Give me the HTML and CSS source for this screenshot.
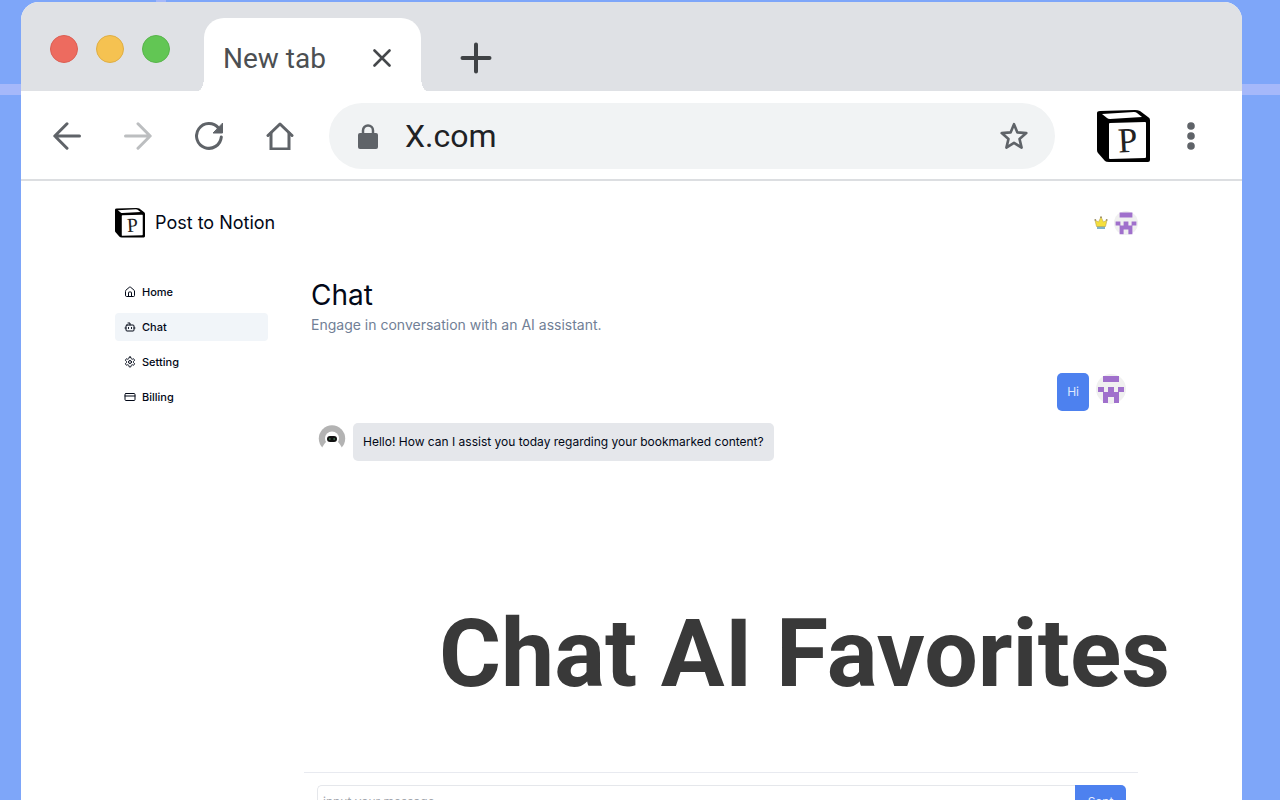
FILE: index.html
```html
<!DOCTYPE html>
<html lang="en">
<head>
    <meta charset="UTF-8">
    <meta name="viewport" content="width=device-width, initial-scale=1.0">
    <title>Post to Notion</title>
    <link rel="stylesheet" href="styles.css">
</head>
<body>
    <!-- Shared shapes -->
    <svg class="defs" aria-hidden="true">
        <symbol id="logo" viewBox="0 0 53 53">
            <path d="M0 3Q0 1 3 1L38 0Q41 0 43 1L51 7Q53 8 53 10V50Q53 52 51 52L12 52Q9 52 8 51L1 43Q0 42 0 40Z" fill="#000"/>
            <path d="M5 4 37 2Q39 2 40 3L45 7 13 9Q11 9 10 8Z" fill="#fff"/>
            <path d="M13 13 48 12Q49 12 49 13V47Q49 48 48 48L13 49Q12 49 12 48V14Q12 13 13 13Z" fill="#fff"/>
            <text x="21" y="42" font-family="Liberation Serif, serif" font-size="35" fill="#222" transform="rotate(-3 30 31)">P</text>
        </symbol>
        <symbol id="avatar" viewBox="0 0 30 30">
            <circle cx="15" cy="15" r="15" fill="#f0f0f0"/>
            <path d="M7 2H23V8H7ZM2 13H8V18H2ZM12 13H18V18H23V29H18V23H12V29H7V18H12ZM22 13H28V18H22Z" fill="#a070cc"/>
        </symbol>
    </svg>

    <div class="window">
        <header class="tab-strip">
            <div class="lights">
                <span class="light red"></span>
                <span class="light yellow"></span>
                <span class="light green"></span>
            </div>
            <div class="tab">
                <span>New tab</span>
                <button class="icon-btn" aria-label="Close tab">
                    <svg width="18" height="18" viewBox="0 0 18 18" stroke="#45484b" stroke-width="2.6" stroke-linecap="round"><path d="M1.500 1.500 16.500 16.500M16.500 1.500 1.500 16.500"/></svg>
                </button>
            </div>
            <button class="icon-btn new-tab" aria-label="Open new tab">
                <svg width="32" height="32" viewBox="0 0 32 32" stroke="#3f4245" stroke-width="4" stroke-linecap="round"><path d="M16 2.500V29.500M2.500 16H29.500"/></svg>
            </button>
        </header>

        <nav class="toolbar" aria-label="Browser">
            <div class="nav-buttons">
                <button class="icon-btn" aria-label="Back">
                    <svg width="28" height="28" viewBox="0 0 28 28" fill="none" stroke="#5f6368" stroke-width="3" stroke-linecap="round" stroke-linejoin="round"><path d="M26.500 14H2M14 1.800 1.800 14 14 26.200"/></svg>
                </button>
                <button class="icon-btn" aria-label="Forward">
                    <svg width="28" height="28" viewBox="0 0 28 28" fill="none" stroke="#bcbec0" stroke-width="3" stroke-linecap="round" stroke-linejoin="round"><path d="M1.500 14H26M14 1.800 26.200 14 14 26.200"/></svg>
                </button>
                <button class="icon-btn" aria-label="Reload">
                    <svg width="28" height="28" viewBox="0 0 28 28" fill="none" stroke="#5f6368" stroke-width="3" stroke-linecap="round"><path d="M26.300 15A12.400 12.400 0 1 1 23.500 6"/><path d="M27.500 1.500V11H18.500Z" fill="#5f6368" stroke="#5f6368" stroke-width="1"/></svg>
                </button>
                <button class="icon-btn" aria-label="Home page">
                    <svg width="28" height="28" viewBox="0 0 28 28" fill="none" stroke="#5f6368" stroke-width="3" stroke-linecap="round" stroke-linejoin="round"><path d="M2 13.500 14 2 26 13.500"/><path d="M5 11V27H23V11" stroke-linejoin="miter"/></svg>
                </button>
            </div>
            <div class="address">
                <svg width="20" height="25" viewBox="0 0 20 25"><path d="M5 10V6.500A5 5 0 0 1 15 6.500V10" fill="none" stroke="#5f6368" stroke-width="2.500"/><rect y="9" width="20" height="16" rx="2" fill="#5f6368"/></svg>
                <input type="text" value="X.com" aria-label="Address">
                <button class="icon-btn" aria-label="Bookmark this tab">
                    <svg width="28" height="28" viewBox="0 0 28 28" fill="none" stroke="#5f6368" stroke-width="2.600" stroke-linejoin="round"><path d="M14 2.200 17.400 10.400 26.300 11.100 19.500 16.900 21.600 25.600 14 20.900 6.400 25.600 8.500 16.900 1.700 11.100 10.600 10.400Z"/></svg>
                </button>
            </div>
            <button class="icon-btn extension" aria-label="Post to Notion extension">
                <svg width="53" height="53"><use href="#logo"/></svg>
            </button>
            <button class="icon-btn" aria-label="Menu">
                <svg width="8" height="28" viewBox="0 0 8 28" fill="#5f6368"><circle cx="4" cy="4" r="3.800"/><circle cx="4" cy="14" r="3.800"/><circle cx="4" cy="24" r="3.800"/></svg>
            </button>
        </nav>

        <div class="app">
            <header class="app-header">
                <a class="brand" href="#">
                    <svg width="30" height="30"><use href="#logo"/></svg>
                    <span>Post to Notion</span>
                </a>
                <div class="account">
                    <svg width="14" height="14" viewBox="0 0 14 14"><path d="M3 10H11V13H3Z" fill="#7fb2c9"/><path d="M1 4 4.500 6 7 1 9.500 6 13 4 11.500 10.500H2.500Z" fill="#f5df3c" stroke="#b9a650" stroke-width=".6"/><circle cx="1.300" cy="3.800" r=".9" fill="#9a8c62"/><circle cx="7" cy="1.200" r=".9" fill="#9a8c62"/><circle cx="12.700" cy="3.800" r=".9" fill="#9a8c62"/></svg>
                    <svg width="24" height="24"><use href="#avatar"/></svg>
                </div>
            </header>

            <div class="columns">
                <nav class="sidebar" aria-label="Main">
                    <a href="#">
                        <svg class="menu-icon" viewBox="0 0 24 24"><path d="M15 21v-8a1 1 0 0 0-1-1h-4a1 1 0 0 0-1 1v8"/><path d="M3 10a2 2 0 0 1 .7-1.500l7-6a2 2 0 0 1 2.600 0l7 6A2 2 0 0 1 21 10v9a2 2 0 0 1-2 2H5a2 2 0 0 1-2-2z"/></svg>
                        Home
                    </a>
                    <a href="#" class="active">
                        <svg class="menu-icon" viewBox="0 0 24 24"><path d="M12 8V4H8"/><rect width="16" height="12" x="4" y="8" rx="2"/><path d="M2 14h2M20 14h2M15 13v2M9 13v2"/></svg>
                        Chat
                    </a>
                    <a href="#">
                        <svg class="menu-icon" viewBox="0 0 24 24"><path d="M12.220 2h-.44a2 2 0 0 0-2 2v.18a2 2 0 0 1-1 1.730l-.43.25a2 2 0 0 1-2 0l-.15-.08a2 2 0 0 0-2.730.73l-.22.38a2 2 0 0 0 .73 2.730l.15.1a2 2 0 0 1 1 1.720v.51a2 2 0 0 1-1 1.740l-.15.09a2 2 0 0 0-.73 2.730l.22.38a2 2 0 0 0 2.730.73l.15-.08a2 2 0 0 1 2 0l.43.25a2 2 0 0 1 1 1.730V20a2 2 0 0 0 2 2h.44a2 2 0 0 0 2-2v-.18a2 2 0 0 1 1-1.730l.43-.25a2 2 0 0 1 2 0l.15.08a2 2 0 0 0 2.730-.73l.22-.39a2 2 0 0 0-.73-2.730l-.15-.08a2 2 0 0 1-1-1.740v-.5a2 2 0 0 1 1-1.740l.15-.09a2 2 0 0 0 .73-2.730l-.22-.38a2 2 0 0 0-2.730-.73l-.15.08a2 2 0 0 1-2 0l-.43-.25a2 2 0 0 1-1-1.730V4a2 2 0 0 0-2-2z"/><circle cx="12" cy="12" r="3"/></svg>
                        Setting
                    </a>
                    <a href="#">
                        <svg class="menu-icon" viewBox="0 0 24 24"><rect width="20" height="14" x="2" y="5" rx="2"/><path d="M2 10h20"/></svg>
                        Billing
                    </a>
                </nav>

                <main class="chat">
                    <h1>Chat</h1>
                    <p class="subtitle">Engage in conversation with an AI assistant.</p>

                    <div class="messages">
                        <div class="message mine">
                            <p class="bubble">Hi</p>
                            <svg width="30" height="30"><use href="#avatar"/></svg>
                        </div>
                        <div class="message">
                            <svg width="28" height="28" viewBox="0 0 28 28"><circle cx="14" cy="14.500" r="13.200" fill="#b3b3b3"/><circle cx="14" cy="14.500" r="7" fill="#fff"/><path d="M3 28Q4 22 8 18L14 16 20 18Q24 22 25 28Z" fill="#fff"/><rect x="9" y="12" width="10" height="6" rx="3" fill="#111"/><circle cx="11.800" cy="15" r=".9" fill="#3d6b4d"/><circle cx="16.200" cy="15" r=".9" fill="#3d6b4d"/></svg>
                            <p class="bubble">Hello! How can I assist you today regarding your bookmarked content?</p>
                        </div>
                    </div>

                    <form class="composer">
                        <input type="text" placeholder="input your message" aria-label="Message">
                        <button type="submit">Sent</button>
                    </form>
                </main>
            </div>
        </div>

        <p class="caption">Chat AI Favorites</p>
    </div>
</body>
</html>
```

FILE: styles.css
```css
* {
    box-sizing: border-box;
}
body {
    margin: 0;
    height: 100vh;
    padding: 2px 38px 0 21px;
    overflow: hidden;
    font-family: Inter, "Liberation Sans", sans-serif;
    color: #020817;
    background-color: #7ea6f9;
    background-image:
        linear-gradient(#a5b8fa, #a5b8fa),
        linear-gradient(#a5b8fa, #a5b8fa);
    background-size: 100% 11px, 10px 100%;
    background-position: 0 84px, 156px 0;
    background-repeat: no-repeat;
}
h1, p {
    margin: 0;
    font-weight: 400;
}
svg {
    display: block;
    flex: none;
}
a {
    color: inherit;
    text-decoration: none;
}
.defs {
    position: absolute;
    width: 0;
    height: 0;
}
.icon-btn {
    padding: 0;
    border: none;
    background: none;
    cursor: pointer;
}

.window {
    position: relative;
    background: #fff;
    border-radius: 18px 18px 0 0;
}

/* Tab strip */
.tab-strip {
    display: flex;
    align-items: flex-end;
    height: 89px;
    padding-left: 29px;
    background: #dfe1e5;
    border-radius: 18px 18px 0 0;
}
.lights {
    display: flex;
    gap: 18px;
    margin-right: 34px;
    padding-bottom: 28px;
}
.light {
    width: 28px;
    height: 28px;
    border-radius: 50%;
    border: 1px solid;
}
.red {
    background: #ed6b5f;
    border-color: #dc5f54;
}
.yellow {
    background: #f5c251;
    border-color: #dfae44;
}
.green {
    background: #62c654;
    border-color: #58b54b;
}
.tab {
    position: relative;
    display: flex;
    align-items: center;
    justify-content: space-between;
    width: 217px;
    height: 73px;
    padding: 7px 30px 0 19px;
    font: 28px Roboto, sans-serif;
    color: #4c4f52;
    background: #fff;
    border-radius: 20px 20px 0 0;
}
.tab::before,
.tab::after {
    content: "";
    position: absolute;
    bottom: 0;
    width: 6px;
    height: 14px;
}
.tab::before {
    right: 100%;
    background: radial-gradient(ellipse 6px 14px at 0 0, #dfe1e5 98%, #fff);
}
.tab::after {
    left: 100%;
    background: radial-gradient(ellipse 6px 14px at 100% 0, #dfe1e5 98%, #fff);
}
.new-tab {
    margin: 0 0 17px 39px;
}

/* Toolbar */
.toolbar {
    display: flex;
    align-items: center;
    height: 90px;
    padding: 2px 47px 0 32px;
    border-bottom: 2px solid #dcdee1;
}
.nav-buttons {
    display: flex;
    gap: 43px;
    margin-right: 35px;
}
.address {
    flex: 1;
    display: flex;
    align-items: center;
    height: 66px;
    padding: 0 27px 0 29px;
    background: #f1f3f4;
    border-radius: 33px;
}
.address input {
    flex: 1;
    min-width: 0;
    padding: 0;
    margin-left: 27px;
    border: none;
    outline: none;
    font: 32px Roboto, sans-serif;
    color: #202124;
    background: none;
}
.extension {
    margin: 0 37px 0 42px;
}

/* App */
.app {
    padding: 26px 104px 0 94px;
}
.app-header {
    display: flex;
    align-items: center;
    justify-content: space-between;
    height: 31px;
}
.brand {
    display: flex;
    align-items: center;
    gap: 10px;
    font-size: 18px;
}
.account {
    display: flex;
    align-items: center;
    gap: 6px;
}
.columns {
    display: flex;
    gap: 36px;
    margin-top: 40px;
}
.sidebar {
    display: flex;
    flex-direction: column;
    gap: 7px;
    width: 153px;
}
.sidebar a {
    display: flex;
    align-items: center;
    gap: 6px;
    height: 28px;
    padding: 0 9px;
    border-radius: 4px;
    font-size: 11px;
    font-weight: 500;
}
.sidebar .active {
    background: #f1f5f9;
}
.menu-icon {
    width: 12px;
    height: 12px;
    fill: none;
    stroke: currentColor;
    stroke-width: 2;
    stroke-linecap: round;
    stroke-linejoin: round;
}
.chat {
    flex: 1;
}
.chat h1 {
    padding-left: 7px;
    font-size: 28px;
    line-height: 34px;
}
.subtitle {
    padding-left: 7px;
    font-size: 14px;
    line-height: 26px;
    color: #718096;
}
.messages {
    display: flex;
    flex-direction: column;
    gap: 12px;
    min-height: 434px;
    padding: 35px 12px 0 14px;
}
.message {
    display: flex;
    gap: 7px;
}
.message svg {
    margin-top: 1px;
}
.mine {
    justify-content: flex-end;
}
.bubble {
    padding: 0 10px;
    border-radius: 5px;
    font-size: 12px;
    line-height: 38px;
    background: #e5e7eb;
}
.mine .bubble {
    color: #dfe8fd;
    background: #4d81ef;
}
.composer {
    display: flex;
    padding: 12px 12px 12px 13px;
    border-top: 1px solid #e8eaf0;
}
.composer input {
    flex: 1;
    min-width: 0;
    height: 32px;
    padding: 0 5px;
    border: 1px solid #e5e7eb;
    border-right: none;
    border-radius: 5px 0 0 5px;
    font: 12px Inter, sans-serif;
}
.composer input::placeholder {
    color: #a3a7ae;
}
.composer button {
    width: 51px;
    padding: 0;
    border: none;
    border-radius: 0 5px 5px 0;
    font: 12px Inter, sans-serif;
    color: #e6edfd;
    background: #4d81ef;
}

/* Big title laid over the page */
.caption {
    position: absolute;
    top: 596px;
    right: 72px;
    font: bold 95px/112px Roboto, sans-serif;
    color: #393939;
}
```
